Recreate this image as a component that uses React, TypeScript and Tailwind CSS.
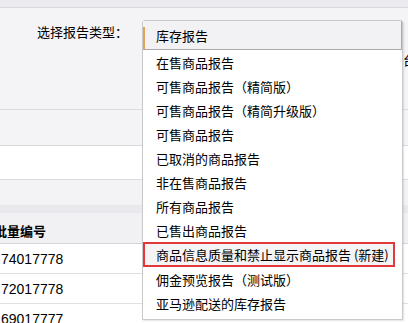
const cjk = { fontFamily: '"Noto Sans CJK SC", "Noto Sans", sans-serif' };

const options = [
  "在售商品报告",
  "可售商品报告（精简版）",
  "可售商品报告（精简升级版）",
  "可售商品报告",
  "已取消的商品报告",
  "非在售商品报告",
  "所有商品报告",
  "已售出商品报告",
  "商品信息质量和禁止显示商品报告 (新建)",
  "佣金预览报告（测试版）",
  "亚马逊配送的库存报告",
];

const ReportSelect = () => {
  return (
    <div className="absolute left-[142px] top-[20px] w-[261px] h-[300px] bg-white border border-[#c9c8cc] rounded-t-[3px] shadow-[1px_1px_2px_rgba(0,0,0,0.12)] text-[13px] text-black">
      <div className="relative h-[29px] bg-[#f2f1f4] border-b border-r border-[#a9a8ac] flex items-center pl-[13px]">
        <span className="absolute left-0 top-[6px] bottom-0 w-[2px] bg-[#e2a35a]" />
        <span className="leading-none">库存报告</span>
      </div>
      <ul>
        {options.map((label, i) =>
          i === 8 ? (
            <li
              key={label}
              className="h-[25px] mr-[7px] border-2 border-[#e2383a] bg-[#f4f3f6] flex items-center pl-[11px] leading-none"
            >
              {label}
            </li>
          ) : (
            <li key={label} className="h-[24px] flex items-center pl-[13px] leading-none">
              {label}
            </li>
          )
        )}
      </ul>
    </div>
  );
};

export default function App() {
  return (
    <div className="relative w-[408px] h-[323px] overflow-hidden bg-white text-black" style={cjk}>
      <div className="h-[8px] bg-[#ebeaee] border-b border-[#d8d7db]" />
      <div className="h-[102px] bg-[#f4f3f6] border-b border-[#dcdbdf] flex">
        <div className="pl-[37px] pt-[16px] text-[13px] leading-[16px]">选择报告类型：</div>
        <div className="ml-auto mr-[-8px] pt-[44px] text-[13px] leading-[16px]">台</div>
      </div>
      <div className="h-[36px] bg-[#f4f3f6] border-b border-[#d9d8dc]" />
      <div className="h-[34px] bg-white border-b border-[#dcdbde]" />
      <div className="h-[25px] bg-[#f3f2f5]" />
      <div className="h-[8px] bg-[#e9e8ec]" />
      <div className="h-[31px] bg-[#f1f0f3] border-b border-[#d6d5d9] flex items-center pt-[4px]">
        <span className="ml-[-6px] text-[13px] font-bold leading-none">批量编号</span>
      </div>
      {["74017778", "72017778", "69017777"].map((n) => (
        <div
          key={n}
          className="h-[30px] border-b border-[#e0dfe3] flex items-center pl-[1px] text-[14px] leading-none"
          style={{ fontFamily: '"Liberation Sans", Arial, sans-serif' }}
        >
          {n}
        </div>
      ))}
      <ReportSelect />
    </div>
  );
}
